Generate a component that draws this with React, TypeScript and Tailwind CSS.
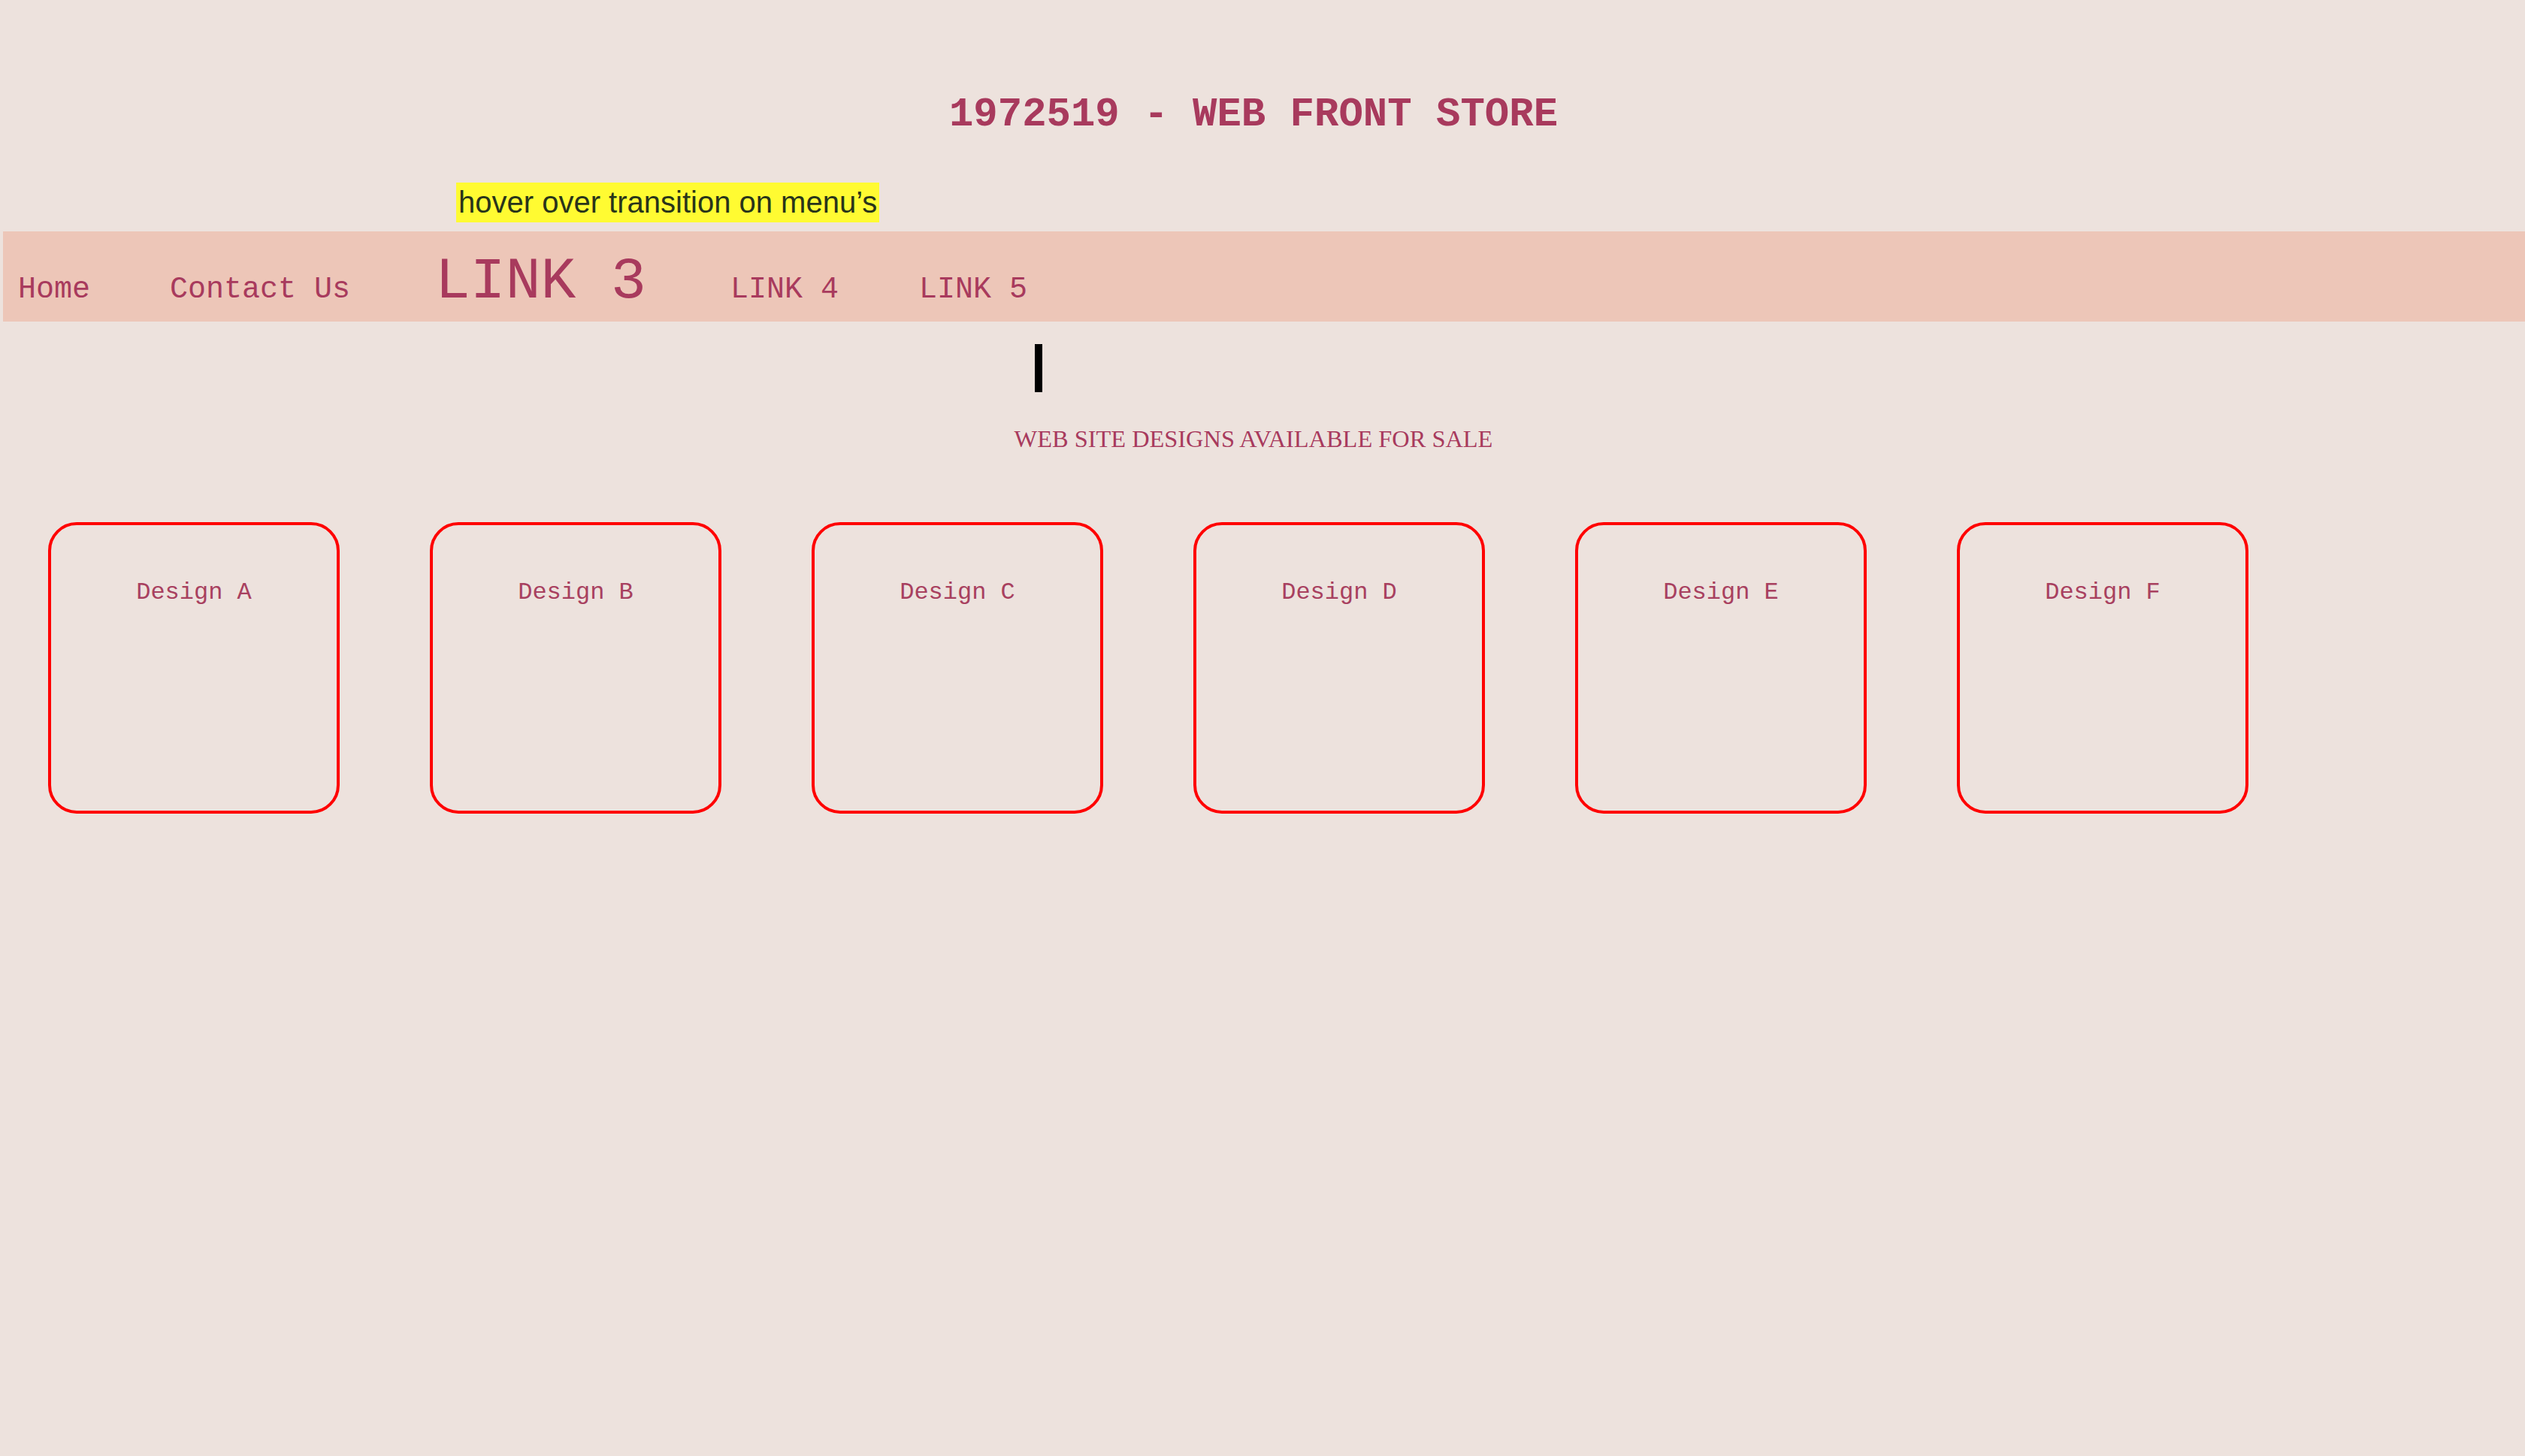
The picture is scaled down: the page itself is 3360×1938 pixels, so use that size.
const designs = ["Design A", "Design B", "Design C", "Design D", "Design E", "Design F"];

const mono = "font-['Liberation_Mono','Courier_New',monospace]";

export default function App() {
  return (
    <div className="min-h-screen w-full bg-[#ede2dd] pt-[126px]">
      <div className="pr-[24px] text-center">
        <h1 className={`${mono} text-[54px] font-bold leading-none text-[#a83a5d] whitespace-pre`}>
          1972519 - WEB FRONT STORE
        </h1>
      </div>

      <div className="mt-[63px] ml-[607px]">
        <span className="inline-block h-[53px] bg-[#fffb32] px-[3px] font-['Liberation_Sans',Arial,sans-serif] text-[40px] leading-[53px] text-[#28341a]">
          hover over transition on menu’s
        </span>
      </div>

      <nav className="mt-[12px] ml-[4px] flex h-[120px] items-baseline bg-[#edc6b8] pl-[20px] pt-[28px] text-[#a83a5d]">
        <a className={`${mono} text-[40px] leading-none`}>Home</a>
        <a className={`${mono} ml-[106px] text-[40px] leading-none whitespace-pre`}>Contact Us</a>
        <a className={`${mono} ml-[113px] text-[78px] leading-none whitespace-pre`}>LINK 3</a>
        <a className={`${mono} ml-[112px] text-[40px] leading-none whitespace-pre`}>LINK 4</a>
        <a className={`${mono} ml-[107px] text-[40px] leading-none whitespace-pre`}>LINK 5</a>
      </nav>

      <div className="mt-[30px] ml-[1377px] h-[64px] w-[10px] bg-black" />

      <div className="pr-[24px] text-center">
        <h2 className="mt-[46px] font-['Liberation_Serif','Times_New_Roman',serif] text-[32.4px] leading-none text-[#a83a5d]">
          WEB SITE DESIGNS AVAILABLE FOR SALE
        </h2>
      </div>

      <div className="mt-[95px] ml-[64px] flex gap-[120px]">
        {designs.map((d) => (
          <div
            key={d}
            className="h-[388px] w-[388px] rounded-[38px] border-[4px] border-[#ff0000] pt-[74px] text-center"
          >
            <p className={`${mono} text-[32px] leading-none text-[#a8405f] whitespace-pre`}>{d}</p>
          </div>
        ))}
      </div>
    </div>
  );
}
